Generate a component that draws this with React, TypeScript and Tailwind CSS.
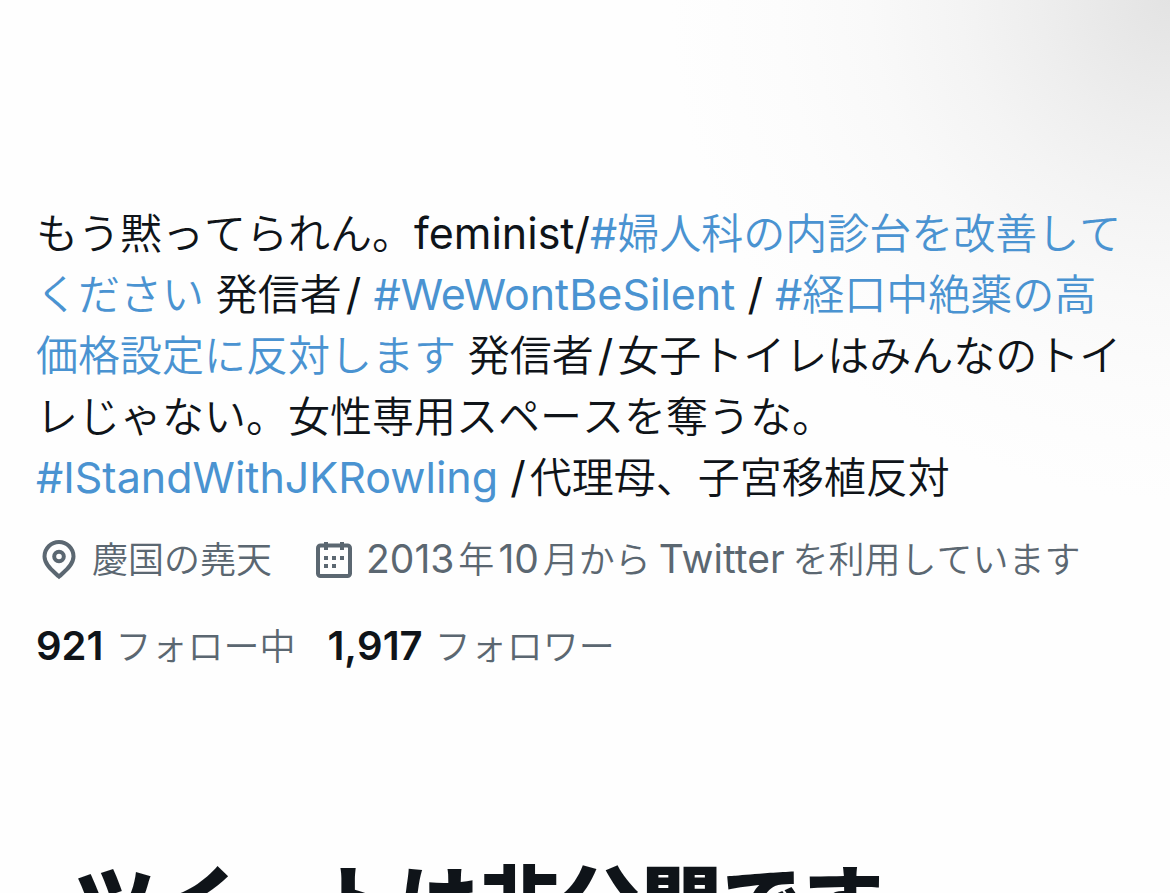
import { ReactNode } from 'react';

function Hashtag({ children }: { children: ReactNode }) {
  return (
    <a href="#" className="text-[#4a93d1]">
      {children}
    </a>
  );
}

// Latin runs are set a little larger than the Japanese around them
function Latin({ children }: { children: ReactNode }) {
  return <span className="text-[43px] leading-none font-normal [font-kerning:normal]">{children}</span>;
}

function MetaLatin({ children }: { children: ReactNode }) {
  return <span className="text-[39px] leading-none font-normal [font-kerning:normal]">{children}</span>;
}

function PinIcon() {
  return (
    <svg viewBox="0 0 34 40" className="w-[34px] h-[40px] shrink-0" fill="none" stroke="currentColor" strokeWidth="4" aria-hidden="true">
      <path d="M17 36.6C12.500 32.500 2.500 25.500 2.500 16.500a14.500 14.500 0 0 1 29 0c0 9-10 16-14.500 20.100z" />
      <circle cx="17" cy="16.500" r="4.800" />
    </svg>
  );
}

function CalendarIcon() {
  return (
    <svg viewBox="0 0 36 36" className="w-[36px] h-[36px] shrink-0" aria-hidden="true">
      <rect x="2" y="3.500" width="32" height="30.500" rx="2.500" fill="none" stroke="currentColor" strokeWidth="4" />
      <path
        fill="currentColor"
        d="M8 0h4v8H8zM24 0h4v8h-4zM8 14h4v4H8zM16 14h4v4h-4zM24 14h4v4h-4zM8 22h4v4H8zM16 22h4v4h-4z"
      />
    </svg>
  );
}

function Stat({ count, label }: { count: string; label: string }) {
  return (
    <a href="#" className="flex items-baseline gap-3">
      <span className="text-[40px] leading-none font-semibold text-[#0f1419]">{count}</span>
      <span>{label}</span>
    </a>
  );
}

export default function App() {
  return (
    <main
      lang="ja"
      className="h-screen overflow-hidden bg-[#fefefe] bg-[radial-gradient(circle_500px_at_100%_0%,#e3e3e3_0%,#eeeeee_26%,#f4f4f4_42%,#f9f9f9_60%,#fcfcfc_78%,#fefefe_100%)] px-9 pt-[203px] font-[350] text-[#0f1419] font-['Inter','Noto_Sans_CJK_JP',sans-serif] [font-kerning:none]"
    >
      <p className="text-[42px] leading-[61px]">
        もう黙ってられん。<Latin>feminist/</Latin>
        <Hashtag><Latin>#</Latin>婦人科の内診台を改善して<br />ください</Hashtag> 発信者
        <Latin><span className="ml-1">/</span> <Hashtag>#WeWontBeSilent</Hashtag> / </Latin>
        <Hashtag><Latin>#</Latin>経口中絶薬の高<br />価格設定に反対します</Hashtag> 発信者
        <Latin><span className="mx-1">/</span></Latin>女子トイレはみんなのトイ<br />
        レじゃない。女性専用スペースを奪うな。<br />
        <Latin><Hashtag>#IStandWithJKRowling</Hashtag> <span className="mr-1">/</span></Latin>代理母、子宮移植反対
      </p>

      <div className="mt-[26px] flex items-center text-[36px] leading-[52px] text-[#5b6771]">
        <div className="ml-1.5 flex items-center gap-4">
          <PinIcon />
          <span>慶国の堯天</span>
        </div>
        <div className="ml-11 flex items-center gap-3.5">
          <CalendarIcon />
          <span className="whitespace-nowrap">
            <MetaLatin>2013</MetaLatin><span className="mx-1">年</span><MetaLatin>10</MetaLatin>
            <span className="ml-1 mr-2">月から</span><MetaLatin>Twitter</MetaLatin><span className="ml-2">を利用しています</span>
          </span>
        </div>
      </div>

      <div className="mt-[35px] flex gap-8 text-[36px] leading-[52px] text-[#5b6771]">
        <Stat count="921" label="フォロー中" />
        <Stat count="1,917" label="フォロワー" />
      </div>

      <h2 className="mt-[171px] ml-[38px] whitespace-nowrap text-[81px] leading-[120px] font-black">ツイートは非公開です</h2>
    </main>
  );
}
